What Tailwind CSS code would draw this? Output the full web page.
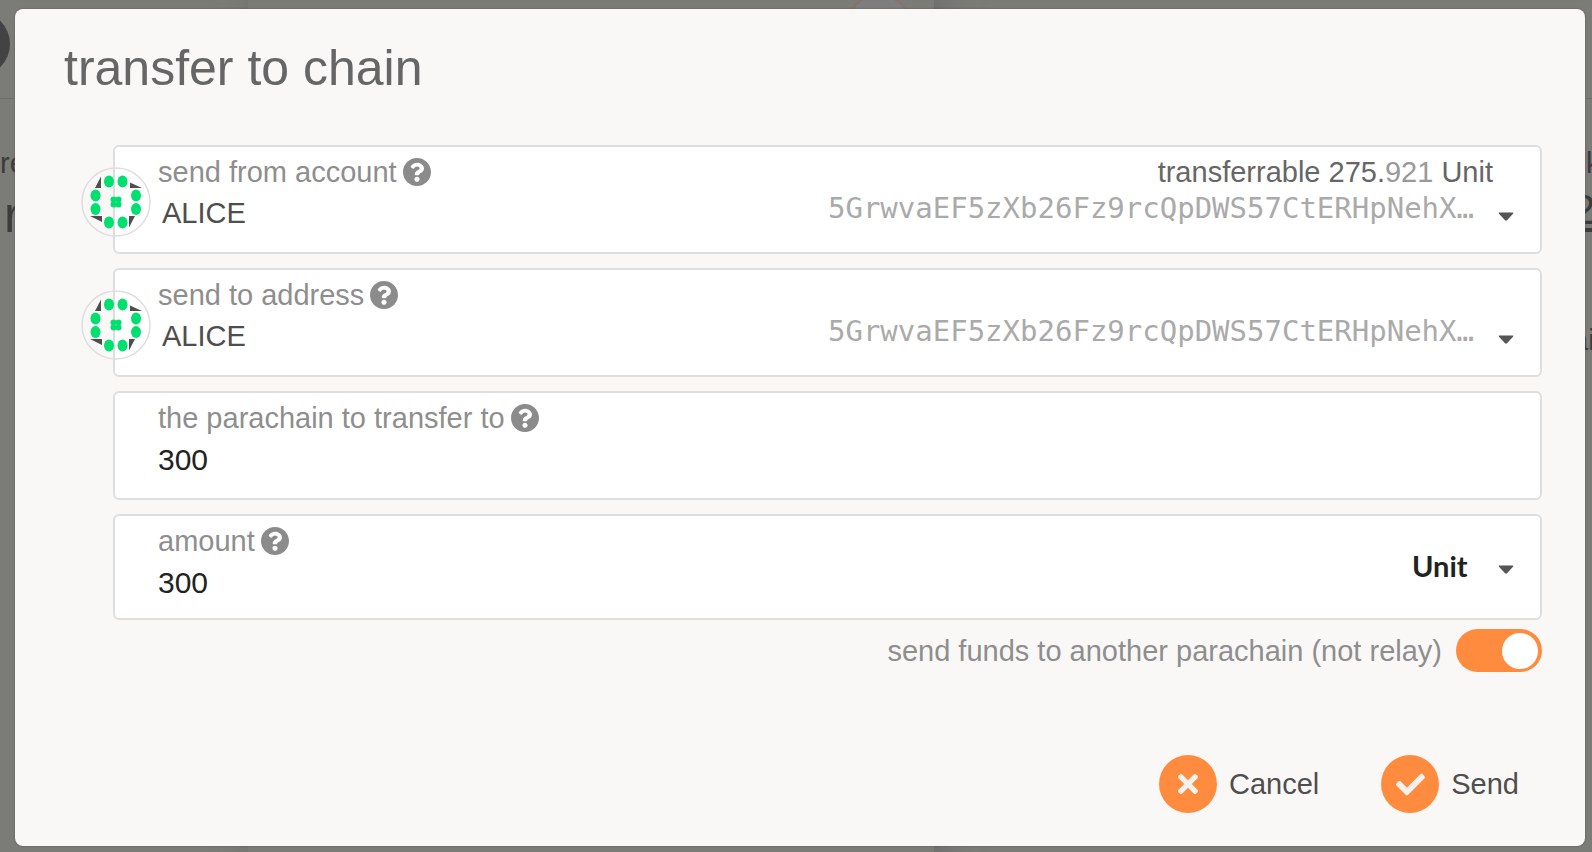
<!DOCTYPE html>
<html lang="en">
<head>
<meta charset="utf-8">
<meta name="viewport" content="width=device-width, initial-scale=1">
<title>transfer to chain</title>
<script src="https://cdn.jsdelivr.net/npm/@tailwindcss/browser@4"></script>
</head>
<body class="relative min-h-screen overflow-x-hidden bg-[#7b7b78] font-['Liberation_Sans',sans-serif] text-[29px] leading-8 text-[#4e4e4e]">

<svg class="hidden" aria-hidden="true">
  <symbol id="help" viewBox="8 8 496 496"><path d="M504 256c0 136.997-111.043 248-248 248S8 392.997 8 256C8 119.083 119.043 8 256 8s248 111.083 248 248zM262.655 90c-54.497 0-89.255 22.957-116.549 63.758-3.536 5.286-2.353 12.415 2.715 16.258l34.699 26.31c5.205 3.947 12.621 3.008 16.665-2.122 17.864-22.658 30.113-35.797 57.303-35.797 20.429 0 45.698 13.148 45.698 32.958 0 14.976-12.363 22.667-32.534 33.976C247.128 238.528 216 254.941 216 296v4c0 6.627 5.373 12 12 12h56c6.627 0 12-5.373 12-12v-1.333c0-28.462 83.186-29.647 83.186-106.667 0-58.002-60.165-102-116.531-102zM256 338c-25.365 0-46 20.635-46 46 0 25.364 20.635 46 46 46s46-20.636 46-46c0-25.365-20.635-46-46-46z"/></symbol>
  <symbol id="identicon" viewBox="0 0 70 70">
    <circle cx="35" cy="35" r="34" fill="none" stroke="#dededf" stroke-width="1.5"/>
    <g fill="#4e4e4e"><path d="M14 21 20 9.500V21z"/><path d="M49 15.500 61 21H49z"/><path d="M9 49H21V55z"/><path d="M48 49H54L48 60.500z"/></g>
    <g fill="#00e070">
      <ellipse cx="28" cy="14.500" rx="5" ry="6"/><ellipse cx="41.500" cy="14.500" rx="5" ry="6"/>
      <ellipse cx="14.500" cy="28.500" rx="5" ry="6"/><ellipse cx="55" cy="28.500" rx="5" ry="6"/>
      <ellipse cx="14.500" cy="42" rx="5" ry="6"/><ellipse cx="55" cy="42" rx="5" ry="6"/>
      <ellipse cx="28" cy="55.500" rx="5" ry="6"/><ellipse cx="41.500" cy="55.500" rx="5" ry="6"/>
      <circle cx="32.500" cy="32.500" r="3"/><circle cx="37.500" cy="32.500" r="3"/><circle cx="32.500" cy="37.500" r="3"/><circle cx="37.500" cy="37.500" r="3"/>
    </g>
  </symbol>
  <symbol id="caret" viewBox="0 0 16 9"><path d="M1.500 .5H14.500Q16 .5 15 1.800L9 8.300Q8 9 7 8.300L1 1.800Q0 .5 1.500 .5z"/></symbol>
</svg>

<!-- dimmed page behind the dialog -->
<div class="absolute inset-0 overflow-hidden text-[#3c3c3b]" aria-hidden="true">
  <div class="absolute left-[248px] top-0 h-full w-[686px] bg-[#7b7b78] shadow-[8px_0_32px_#606060]"></div>
  <div class="absolute left-[846px] -top-[6px] size-[66px] rounded-full border-2 border-[#84736b] bg-[#7e7e7e]"></div>
  <div class="absolute -left-[54px] top-[12px] size-16 rounded-full bg-[#434343]"></div>
  <div class="absolute left-0 top-[98px] h-px w-full bg-[#6e6e6f]"></div>
  <span class="absolute left-0 top-[147px]">re</span>
  <span class="absolute left-1 top-[190px] text-[50px] leading-[50px]">r</span>
  <span class="absolute left-[1586px] top-[147px]">k</span>
  <span class="absolute left-[1572px] top-[192px] border-b-4 border-[#3c3c3b] text-[42px] leading-9">2</span>
  <span class="absolute left-[1572px] top-[324px]">ai</span>
</div>

<main role="dialog" aria-labelledby="title" class="relative pl-[15px] pr-[7px] pt-[9px]">
<form class="rounded-lg bg-[#f9f8f7] pb-[33px] pl-[49px] pr-[43px] pt-[29px] shadow-[0_0_2px_#555]">
  <h1 id="title" class="text-[50px] leading-[60px] text-[#666]">transfer to chain</h1>

  <div class="ml-[49px] mt-[47px] flex flex-col gap-[14px]">
    <div class="relative flex h-[109px] justify-between rounded-md border-2 border-[#dededf] bg-white pl-[43px] pr-[26px] pt-[9px]">
      <svg class="absolute -left-[34px] top-[20px] size-[70px]" aria-hidden="true"><use href="#identicon"/></svg>
      <div>
        <label for="from" class="flex items-center gap-[6px] text-[#8e8e8e]">send from account <svg class="size-7 fill-[#8b8b8b]" aria-hidden="true"><use href="#help"/></svg></label>
        <input id="from" value="ALICE" class="mt-[9px] block w-80 pl-1 leading-8 outline-none">
      </div>
      <div class="text-right">
        <div class="pr-[21px] text-[#666]">transferrable 275.<span class="text-[#999]">921</span> Unit</div>
        <button type="button" aria-label="choose sending account" class="mt-1 flex items-center gap-6 font-['DejaVu_Sans_Mono',monospace] text-[#aaa]">5GrwvaEF5zXb26Fz9rcQpDWS57CtERHpNehX…<svg class="mt-4 h-[9px] w-4 fill-[#555]" aria-hidden="true"><use href="#caret"/></svg></button>
      </div>
    </div>

    <div class="relative flex h-[109px] justify-between rounded-md border-2 border-[#dededf] bg-white pl-[43px] pr-[26px] pt-[9px]">
      <svg class="absolute -left-[34px] top-[20px] size-[70px]" aria-hidden="true"><use href="#identicon"/></svg>
      <div>
        <label for="to" class="flex items-center gap-[6px] text-[#8e8e8e]">send to address <svg class="size-7 fill-[#8b8b8b]" aria-hidden="true"><use href="#help"/></svg></label>
        <input id="to" value="ALICE" class="mt-[9px] block w-80 pl-1 leading-8 outline-none">
      </div>
      <div class="pt-8">
        <button type="button" aria-label="choose receiving address" class="mt-1 flex items-center gap-6 font-['DejaVu_Sans_Mono',monospace] text-[#aaa]">5GrwvaEF5zXb26Fz9rcQpDWS57CtERHpNehX…<svg class="mt-4 h-[9px] w-4 fill-[#555]" aria-hidden="true"><use href="#caret"/></svg></button>
      </div>
    </div>

    <div class="h-[109px] rounded-md border-2 border-[#dededf] bg-white pl-[43px] pr-[26px] pt-[9px]">
      <label for="para" class="flex items-center gap-[6px] text-[#8e8e8e]">the parachain to transfer to <svg class="size-7 fill-[#8b8b8b]" aria-hidden="true"><use href="#help"/></svg></label>
      <input id="para" value="300" class="mt-[10px] block w-full text-[30px] leading-8 text-[#222] outline-none">
    </div>

    <div class="flex h-[106px] justify-between rounded-md border-2 border-[#dededf] bg-white pl-[43px] pr-[26px] pt-[9px]">
      <div>
        <label for="amount" class="flex items-center gap-[6px] text-[#8e8e8e]">amount <svg class="size-7 fill-[#8b8b8b]" aria-hidden="true"><use href="#help"/></svg></label>
        <input id="amount" value="300" class="mt-[10px] block w-full text-[30px] leading-8 text-[#222] outline-none">
      </div>
      <div class="flex items-center pb-3">
        <select aria-label="unit" class="w-[78px] appearance-none font-['Lato',sans-serif] font-bold text-[#222] outline-none"><option>Unit</option></select>
        <svg class="ml-2 mt-2 h-[9px] w-4 fill-[#555]" aria-hidden="true"><use href="#caret"/></svg>
      </div>
    </div>
  </div>

  <label class="mt-[9px] flex items-center justify-end gap-[14px] text-[#8e8e8e]">send funds to another parachain (not relay)
    <input type="checkbox" checked class="h-[43px] w-[86px] appearance-none rounded-full bg-[#ff8c3e] before:ml-[46px] before:mt-1 before:block before:size-9 before:rounded-full before:bg-white">
  </label>

  <div class="mt-[83px] flex justify-end gap-[62px] pr-[23px]">
    <button type="button" class="flex items-center gap-3">
      <span class="flex size-[58px] items-center justify-center rounded-full bg-[#ff8c3e]"><svg viewBox="0 0 352 352" class="size-5 fill-[#f5f2ee]"><path d="M242.720 176l100.070-100.070c12.280-12.280 12.280-32.190 0-44.480l-22.240-22.240c-12.280-12.280-32.190-12.280-44.480 0L176 109.280 75.930 9.210c-12.280-12.280-32.190-12.280-44.480 0L9.210 31.450c-12.280 12.280-12.280 32.190 0 44.480L109.280 176 9.210 276.070c-12.280 12.280-12.280 32.190 0 44.480l22.240 22.240c12.280 12.280 32.200 12.280 44.480 0L176 242.720l100.070 100.070c12.280 12.280 32.200 12.280 44.480 0l22.240-22.240c12.280-12.280 12.280-32.190 0-44.480L242.720 176z"/></svg></span>Cancel
    </button>
    <button type="submit" class="flex items-center gap-3">
      <span class="flex size-[58px] items-center justify-center rounded-full bg-[#ff8c3e]"><svg viewBox="0 0 512 512" class="size-[29px] fill-[#f5f2ee]"><path d="M173.898 439.404l-166.400-166.400c-9.997-9.997-9.997-26.206 0-36.204l36.203-36.204c9.997-9.998 26.207-9.998 36.204 0L192 312.690 432.095 72.596c9.997-9.997 26.207-9.997 36.204 0l36.203 36.204c9.997 9.997 9.997 26.206 0 36.204l-294.400 294.401c-9.998 9.997-26.207 9.997-36.204-.001z"/></svg></span>Send
    </button>
  </div>
</form>
</main>
</body>
</html>
